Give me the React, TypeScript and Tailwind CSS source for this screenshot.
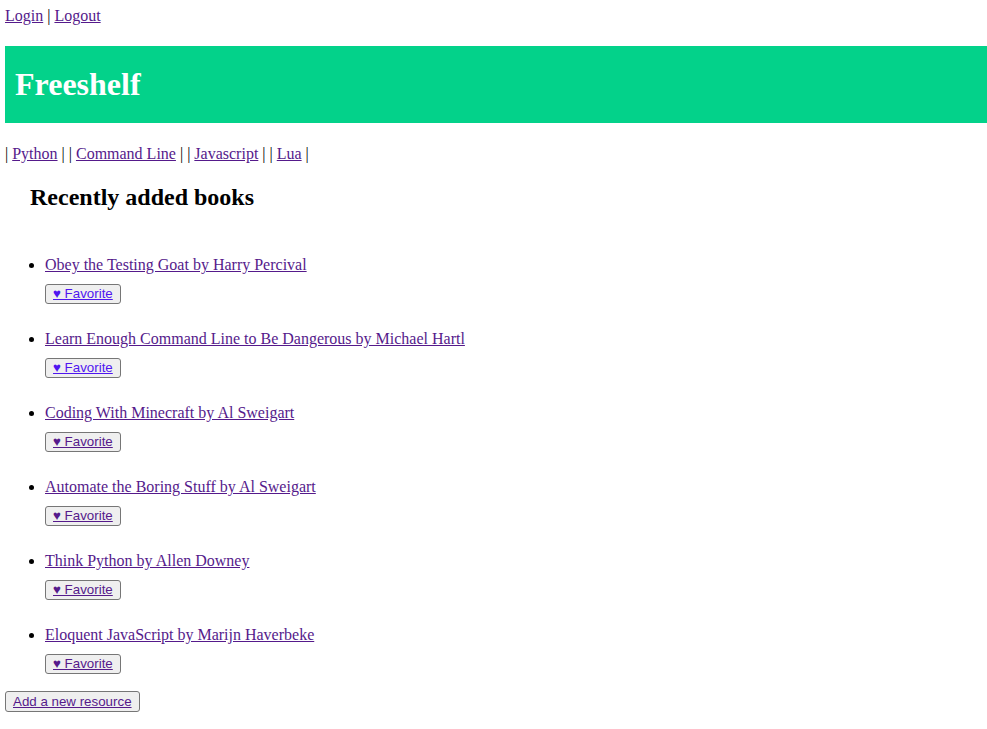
import React from 'react';

const books = [
  { title: 'Obey the Testing Goat by Harry Percival', fresh: true },
  { title: 'Learn Enough Command Line to Be Dangerous by Michael Hartl', fresh: true },
  { title: 'Coding With Minecraft by Al Sweigart', fresh: false },
  { title: 'Automate the Boring Stuff by Al Sweigart', fresh: false },
  { title: 'Think Python by Allen Downey', fresh: false },
  { title: 'Eloquent JavaScript by Marijn Haverbeke', fresh: false },
];

const categories = ['Python', 'Command Line', 'Javascript', 'Lua'];

const FavoriteButton: React.FC<{ fresh: boolean }> = ({ fresh }) => (
  <button
    type="button"
    className="h-[20px] px-[7px] border border-[#767676] rounded-[3px] bg-[#efefef] text-[13.33px] leading-none font-['Liberation_Sans',Arial,sans-serif]"
  >
    <span className={fresh ? 'underline text-[#4f16f0]' : 'underline text-[#551a8b]'}>♥ Favorite</span>
  </button>
);

export default function App() {
  return (
    <div className="min-h-[729px] bg-white px-[5px] pt-[7px] pb-[5px] text-[16px] leading-[18px] text-black font-['Liberation_Serif','Times_New_Roman',serif]">
      {/* Auth links */}
      <div>
        <a href="#" className="underline text-[#551a8b]">Login</a> |{' '}
        <a href="#" className="underline text-[#551a8b]">Logout</a>
      </div>

      {/* Banner */}
      <header className="mt-[21px] -mr-[5px] h-[77px] bg-[#03d28a] flex items-center px-[10px]">
        <h1 className="text-[32px] leading-[37px] font-bold text-white">Freeshelf</h1>
      </header>

      {/* Categories */}
      <nav className="mt-[22px]">
        {categories.map((c) => (
          <span key={c}>
            |{' '}
            <a href="#" className="underline text-[#551a8b]">{c}</a>{' '}|{' '}
          </span>
        ))}
      </nav>

      <h2 className="mt-[20px] ml-[25px] text-[24px] leading-[28px] font-bold">Recently added books</h2>

      <ul className="mt-[45px] list-disc pl-[40px]">
        {books.map((b) => (
          <li key={b.title} className="mb-[26px]">
            <a href="#" className="underline text-[#551a8b]">{b.title}</a>
            <div className="mt-[10px]">
              <FavoriteButton fresh={b.fresh} />
            </div>
          </li>
        ))}
      </ul>

      <button
        type="button"
        className="block -mt-[9px] h-[21px] px-[7px] border border-[#767676] rounded-[3px] bg-[#efefef] text-[13.33px] leading-none font-['Liberation_Sans',Arial,sans-serif]"
      >
        <span className="underline text-[#551a8b]">Add a new resource</span>
      </button>
    </div>
  );
}
